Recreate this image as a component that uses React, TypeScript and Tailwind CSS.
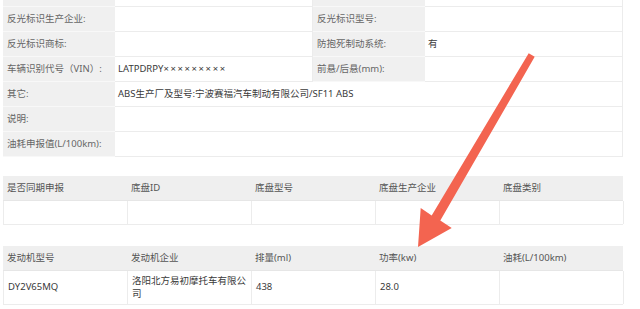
import React from 'react';

const font = { fontFamily: '"Noto Sans", "Noto Sans CJK SC", sans-serif' };

type Pair = [string, React.ReactNode];

// top spec rows: two label/value pairs per row, or one label with a wide value
const vin = (
  <>
    LATPDRPY<span className="tracking-[1.6px]">×××××××××</span>
  </>
);

const pairRows: [Pair, Pair][] = [
  [['', ''], ['', '']],
  [['反光标识生产企业:', ''], ['反光标识型号:', '']],
  [['反光标识商标:', ''], ['防抱死制动系统:', '有']],
  [['车辆识别代号（VIN）:', vin], ['前悬/后悬(mm):', '']],
];

const wideRows: Pair[] = [
  ['其它:', 'ABS生产厂及型号:宁波赛福汽车制动有限公司/SF11 ABS'],
  ['说明:', ''],
  ['油耗申报值(L/100km):', ''],
];

function Label({ text }: { text: string }) {
  return (
    <div className="flex items-center h-[25px] px-[4px] bg-[#f0f0f0] border-b border-[#f8f8f8] text-[#666] whitespace-nowrap">
      {text}
    </div>
  );
}

function Value({ text, wide }: { text: React.ReactNode; wide?: boolean }) {
  return (
    <div
      className={`flex items-center h-[25px] px-[3px] bg-white border-b border-r border-[#ececec] text-[#3a3a3a] whitespace-nowrap ${
        wide ? 'col-span-3' : ''
      }`}
    >
      {text}
    </div>
  );
}

function SmallTable({ head, row, rowH }: { head: string[]; row: string[]; rowH: string }) {
  return (
    <div>
      <div className="grid grid-cols-[124px_124px_124px_124px_124px] bg-[#efefef] h-[25px] border-b border-[#e6e6e6]">
        {head.map((h, i) => (
          <div key={i} className="flex items-center px-[4px] text-[#555] whitespace-nowrap">
            {h}
          </div>
        ))}
      </div>
      <div className={`grid grid-cols-[124px_124px_124px_124px_124px] border-b border-l border-[#ececec] ${rowH}`}>
        {row.map((c, i) => (
          <div key={i} className="flex items-center px-[4px] border-r border-[#ececec] text-[#3a3a3a] leading-[12.5px]">
            {c}
          </div>
        ))}
      </div>
    </div>
  );
}

export default function App() {
  return (
    <div className="relative w-[640px] h-[309px] overflow-hidden bg-white text-[9.5px]" style={font}>
      <div className="pl-[3px] w-[623px]">
        {/* spec table */}
        <div className="grid grid-cols-[112px_198px_112px_198px] -mt-[18px]">
          {pairRows.map(([a, b], i) => (
            <React.Fragment key={i}>
              <Label text={a[0]} />
              <Value text={a[1]} />
              <Label text={b[0]} />
              <Value text={b[1]} />
            </React.Fragment>
          ))}
          {wideRows.map(([l, v], i) => (
            <React.Fragment key={'w' + i}>
              <Label text={l} />
              <Value text={v} wide />
            </React.Fragment>
          ))}
        </div>

        <div className="mt-[19px]">
          <SmallTable
            head={['是否同期申报', '底盘ID', '底盘型号', '底盘生产企业', '底盘类别']}
            row={['', '', '', '', '']}
            rowH="h-[24px]"
          />
        </div>

        <div className="mt-[21px]">
          <SmallTable
            head={['发动机型号', '发动机企业', '排量(ml)', '功率(kw)', '油耗(L/100km)']}
            row={['DY2V65MQ', '洛阳北方易初摩托车有限公司', '438', '28.0', '']}
            rowH="h-[34px]"
          />
        </div>
      </div>

      {/* annotation arrow */}
      <svg className="absolute left-0 top-0 pointer-events-none" width="640" height="309" viewBox="0 0 640 309">
        <polygon
          points="528.7,53.2 534.7,56.8 440.3,220.6 451.7,228 418,247 420.7,208 431.7,215.4"
          fill="#f36450"
        />
      </svg>
    </div>
  );
}
